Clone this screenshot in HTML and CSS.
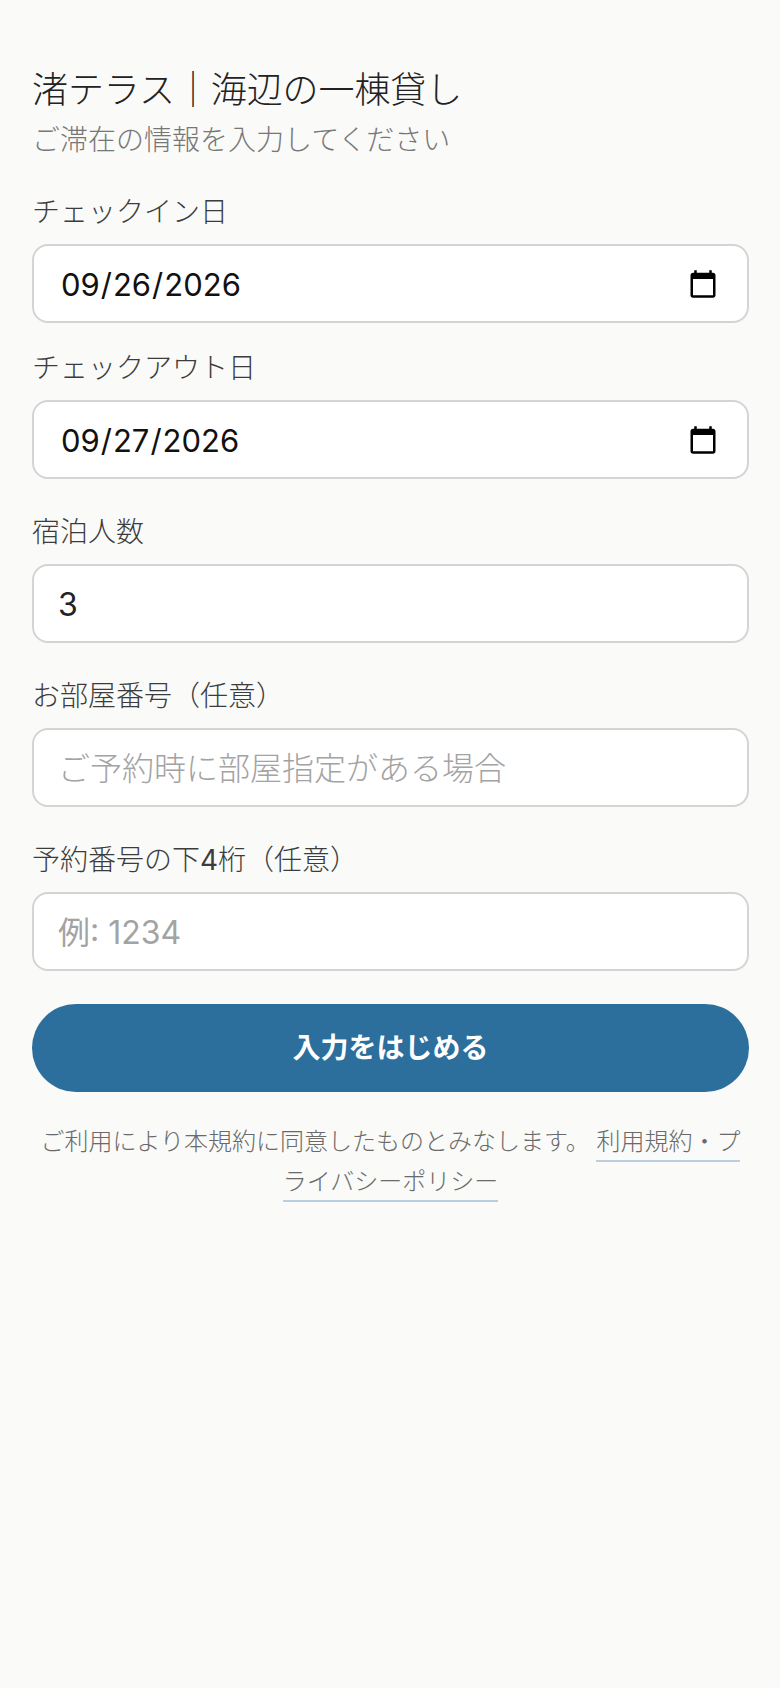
FILE: index.html
```html
<!DOCTYPE html>
<html lang="ja">
<head>
  <meta charset="UTF-8">
  <meta name="viewport" content="width=device-width, initial-scale=1.0">
  <title>渚テラス｜海辺の一棟貸し</title>
  <link rel="stylesheet" href="styles.css">
</head>
<body>
  <main class="container">
    <h1 class="title">渚テラス｜海辺の一棟貸し</h1>
    <p class="subtitle">ご滞在の情報を入力してください</p>
    <form id="stay-form">
      <div class="form-group form-group-date">
        <label for="checkin">チェックイン日</label>
        <input type="date" id="checkin" value="2026-09-26">
      </div>
      <div class="form-group">
        <label for="checkout">チェックアウト日</label>
        <input type="date" id="checkout" value="2026-09-27">
      </div>
      <div class="form-group">
        <label for="guests">宿泊人数</label>
        <input type="number" id="guests" value="3">
      </div>
      <div class="form-group">
        <label for="room">お部屋番号（任意）</label>
        <input type="text" id="room" placeholder="ご予約時に部屋指定がある場合">
      </div>
      <div class="form-group">
        <label for="booking">予約番号の下<span class="digit">4</span>桁（任意）</label>
        <input type="text" id="booking" placeholder="例: 1234">
      </div>
      <button type="submit">入力をはじめる</button>
    </form>
    <p class="terms">ご利用により本規約に同意したものとみなします。 <a href="#">利用規約・プライバシーポリシー</a></p>
  </main>
</body>
</html>
```

FILE: styles.css
```css
body {
  font-family: "Inter", "Noto Sans CJK JP", sans-serif;
  margin: 0;
  padding: 0;
  background-color: #fafaf8;
}
.container {
  padding: 66px 31px 0 32px;
}
.title {
  margin: 0;
  font-size: 36px;
  line-height: 48px;
  font-weight: 300;
  color: #222;
  letter-spacing: -0.1px;
}
.subtitle {
  margin: 4px 0 30px;
  font-size: 28px;
  line-height: 44px;
  font-weight: 300;
  color: #777;
}
.form-group {
  margin-bottom: 33px;
}
.form-group-date {
  margin-bottom: 25px;
}
.form-group label {
  display: block;
  margin-bottom: 12px;
  font-size: 28px;
  line-height: 40px;
  font-weight: 300;
  color: #3c3c3c;
}
.form-group label .digit {
  font-weight: 400;
}
.form-group input {
  display: block;
  box-sizing: border-box;
  width: 100%;
  height: 79px;
  padding: 2px 24px 0;
  border: 2px solid #d4d4d4;
  border-radius: 16px;
  background-color: white;
  font-family: inherit;
  font-size: 32px;
  color: #222;
  outline: none;
  appearance: none;
}
.form-group input[type="date"] {
  padding: 2px 26px 0;
  font-size: 31px;
  color: #111;
}
.form-group input::placeholder {
  color: #a3a3a3;
  opacity: 1;
  font-weight: 300;
}
.form-group #booking::placeholder {
  font-weight: 400;
}
.form-group input::-webkit-calendar-picker-indicator {
  width: 32px;
  height: 32px;
  padding: 0;
  margin: 0 2px 0 0;
}
button {
  display: block;
  width: 100%;
  height: 88px;
  margin-top: 25px;
  padding: 0 0 4px;
  border: none;
  border-radius: 44px;
  background-color: #2c6e9c;
  color: white;
  font-family: inherit;
  font-size: 28px;
  font-weight: 700;
}
.terms {
  margin: 30px 0 0;
  text-align: center;
  font-size: 24px;
  line-height: 40px;
  font-weight: 300;
  color: #6a6a6a;
}
.terms a {
  color: #6a6a6a;
  text-decoration: none;
  border-bottom: 2px solid #b9cfdf;
  padding-bottom: 4px;
}
```
